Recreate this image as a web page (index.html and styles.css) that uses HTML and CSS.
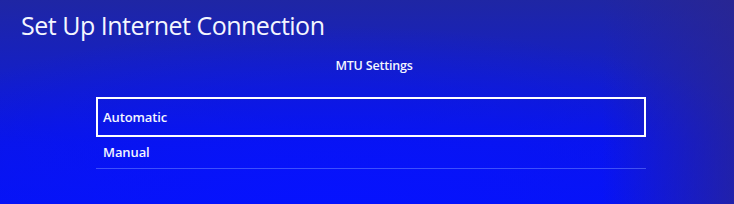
FILE: index.html
```html
<!DOCTYPE html>
<html lang="en">
<head>
    <meta charset="UTF-8">
    <meta name="viewport" content="width=device-width, initial-scale=1.0">
    <title>Set Up Internet Connection</title>
    <link rel="stylesheet" href="styles.css">
</head>
<body>
    <div class="screen">
        <h1 class="title">Set Up Internet Connection</h1>
        <div class="subtitle">MTU Settings</div>
        <div class="menu">
            <div class="menu-item selected">Automatic</div>
            <div class="menu-item">Manual</div>
        </div>
    </div>
</body>
</html>
```

FILE: styles.css
```css
body{
    margin: 0;
    font-family: "Open Sans", "Noto Sans", sans-serif;
    color: #f4f6ff;
}
.screen{
    width: 734px;
    height: 204px;
    overflow: hidden;
    background:
        linear-gradient(90deg, rgba(40, 36, 140, 0) 0%, rgba(40, 36, 140, 0) 82%, rgba(44, 38, 140, 0.7) 100%),
        radial-gradient(ellipse 520px 190px at 330px 215px, #0612ff 0%, rgba(6, 18, 255, 0) 100%),
        linear-gradient(180deg, #1f26a4 0%, #1520c4 35%, #0a16e6 70%, #0714f2 100%);
}
.title{
    margin: 0;
    padding: 8px 0 0 21px;
    font-size: 25px;
    font-weight: 400;
    line-height: 34px;
    letter-spacing: -0.5px;
}
.subtitle{
    text-align: center;
    padding-left: 14px;
    margin-top: 15px;
    font-size: 12.5px;
    font-weight: 600;
    line-height: 18px;
    letter-spacing: -0.2px;
}
.menu{
    margin: 22px 0 0 96px;
    width: 550px;
}
.menu-item{
    height: 31px;
    line-height: 31px;
    padding-left: 7px;
    font-size: 13px;
    font-weight: 600;
    letter-spacing: -0.1px;
    border-bottom: 1px solid rgba(110, 130, 255, 0.55);
}
.selected{
    border: 2px solid #ffffff;
    padding-left: 5px;
    height: 36px;
    line-height: 36px;
}
```
